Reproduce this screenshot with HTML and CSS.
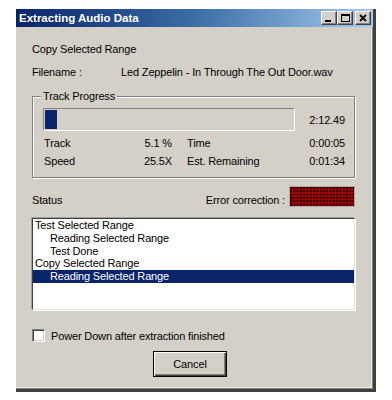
FILE: index.html
```html
<!DOCTYPE html>
<html>
<head>
<meta charset="utf-8">
<link rel="stylesheet" href="styles.css">
</head>
<body>
<div class="window">
  <div class="titlebar">
    <span class="title">Extracting Audio Data</span>
    <div class="tbuttons">
      <span class="tbtn"><svg width="14" height="12" viewBox="0 0 14 12"><rect x="3" y="8" width="6" height="2" fill="#000"/></svg></span>
      <span class="tbtn"><svg width="14" height="12" viewBox="0 0 14 12"><rect x="3.5" y="2.5" width="8" height="7" fill="none" stroke="#000"/><rect x="3" y="2" width="9" height="2" fill="#000"/></svg></span>
      <span class="tbtn close"><svg width="14" height="12" viewBox="0 0 14 12"><path d="M4 3 L10 9 M10 3 L4 9" stroke="#000" stroke-width="1.8"/></svg></span>
    </div>
  </div>
  <div class="content">
    <div class="line first">Copy Selected Range</div>
    <div class="line filename"><span class="flabel">Filename :</span><span>Led Zeppelin - In Through The Out Door.wav</span></div>
    <div class="group">
      <span class="legend">Track Progress</span>
      <div class="prow">
        <div class="pbar"><div class="pfill"></div></div>
        <span class="ptime">2:12.49</span>
      </div>
      <div class="stats">
        <span>Track</span><span class="num">5.1 %</span><span class="lab2">Time</span><span class="num">0:00:05</span>
        <span>Speed</span><span class="num">25.5X</span><span class="lab2">Est. Remaining</span><span class="num">0:01:34</span>
      </div>
    </div>
    <div class="statusrow">
      <span class="grow">Status</span>
      <span>Error correction :</span>
      <span class="led"></span>
    </div>
    <div class="listbox">
      <div class="item">Test Selected Range</div>
      <div class="item sub">Reading Selected Range</div>
      <div class="item sub">Test Done</div>
      <div class="item">Copy Selected Range</div>
      <div class="item sub sel">Reading Selected Range</div>
    </div>
    <label class="check"><span class="cbox"></span><span>Power Down after extraction finished</span></label>
    <div class="btnrow"><button class="cancel">Cancel</button></div>
  </div>
</div>
</body>
</html>
```

FILE: styles.css
```css
html, body {
  margin: 0;
  padding: 0;
  background: #ffffff;
}
body {
  font-family: "Liberation Sans", Arial, sans-serif;
  font-size: 11px;
  letter-spacing: -0.15px;
  color: #000;
}
.window {
  margin: 9px 0 0 16px;
  width: 357px;
  height: 380px;
  background: #d4d0c8;
  border-right: 3px solid #404040;
  border-bottom: 3px solid #404040;
  box-shadow: inset -1px -1px 0 #808080, inset -2px -2px 0 #ecebe6;
}
.titlebar {
  height: 18px;
  background: linear-gradient(to right, #0a246a 0%, #3a6ea5 50%, #a6caf0 100%);
  display: flex;
  align-items: center;
  justify-content: space-between;
  padding: 0 2px 0 3px;
}
.title {
  color: #fff;
  font-weight: bold;
  font-size: 11.5px;
  letter-spacing: 0;
}
.tbuttons {
  display: flex;
  gap: 0;
}
.tbtn {
  width: 16px;
  height: 14px;
  box-sizing: border-box;
  background: #d4d0c8;
  border-top: 1px solid #fff;
  border-left: 1px solid #fff;
  border-right: 1px solid #404040;
  border-bottom: 1px solid #404040;
  box-shadow: inset -1px -1px 0 #808080;
  display: flex;
  align-items: center;
  justify-content: center;
}
.tbtn svg { display: block; }
.tbtn.close { margin-left: 2px; }
.content {
  padding: 0 18px 0 16px;
}
.line {
  height: 13px;
  line-height: 13px;
  white-space: nowrap;
}
.first { margin-top: 16px; }
.filename { margin-top: 10px; display: flex; }
.flabel { width: 89px; }
.group {
  position: relative;
  margin-top: 17px;
  height: 82px;
  border: 1px solid #808080;
  box-shadow: inset 1px 1px 0 #fff, 1px 1px 0 #fff;
  padding: 11px 9px 0 10px;
  box-sizing: border-box;
}
.legend {
  position: absolute;
  top: -7px;
  left: 8px;
  padding: 0 2px;
  background: #d4d0c8;
  line-height: 13px;
}
.prow {
  display: flex;
  align-items: center;
  justify-content: space-between;
}
.pbar {
  width: 252px;
  height: 23px;
  box-sizing: border-box;
  border-top: 1px solid #808080;
  border-left: 1px solid #808080;
  border-right: 1px solid #fff;
  border-bottom: 1px solid #fff;
  padding: 0 0 0 1px;
  display: flex;
  align-items: center;
}
.pfill {
  width: 12px;
  height: 19px;
  background: #0a246a;
}
.stats {
  margin-top: 3px;
  display: grid;
  grid-template-columns: 60px 68px 1fr auto;
  grid-auto-rows: 18px;
  align-items: center;
  padding-left: 1px;
}
.num { text-align: right; }
.lab2 { padding-left: 15px; }
.statusrow {
  margin-top: 8px;
  height: 21px;
  display: flex;
  align-items: flex-end;
  line-height: 13px;
}
.grow { flex: 1; }
.led {
  margin-left: 4px;
  width: 66px;
  height: 21px;
  box-sizing: border-box;
  border: 1px solid #a8a8a8;
  background-color: #260000;
  background-image:
    radial-gradient(circle, #c80000 0.8px, #900000 1.2px, transparent 1.6px);
  background-size: 3.3px 3.3px;
  background-position: 1px 1px;
}
.listbox {
  margin-top: 11px;
  height: 92px;
  box-sizing: border-box;
  background: #fff;
  border-top: 1px solid #404040;
  border-left: 1px solid #404040;
  border-right: 1px solid #e4e2dc;
  border-bottom: 1px solid #e4e2dc;
  box-shadow: -1px -1px 0 #a0a0a0, 1px 1px 0 #fff;
}
.item {
  height: 12.75px;
  line-height: 12.75px;
  padding-left: 2px;
  white-space: nowrap;
}
.item.sub { padding-left: 17px; }
.item.sel {
  background: #0a246a;
  color: #fff;
}
.check {
  margin-top: 19px;
  display: flex;
  align-items: center;
  gap: 6px;
  height: 13px;
}
.cbox {
  width: 13px;
  height: 13px;
  box-sizing: border-box;
  background: #fff;
  border-top: 1px solid #808080;
  border-left: 1px solid #808080;
  border-right: 1px solid #fff;
  border-bottom: 1px solid #fff;
  box-shadow: inset 1px 1px 0 #404040, inset -1px -1px 0 #d4d0c8;
}
.btnrow {
  margin-top: 9px;
  padding-left: 121px;
}
.cancel {
  display: block;
  width: 74px;
  height: 26px;
  margin: 0;
  padding: 0;
  font-family: "Liberation Sans", Arial, sans-serif;
  font-size: 11px;
  letter-spacing: -0.15px;
  color: #000;
  background: #d4d0c8;
  border: 1px solid #000;
  box-shadow: inset 1px 1px 0 #fff, inset -1px -1px 0 #404040, inset -2px -2px 0 #808080;
}
```
